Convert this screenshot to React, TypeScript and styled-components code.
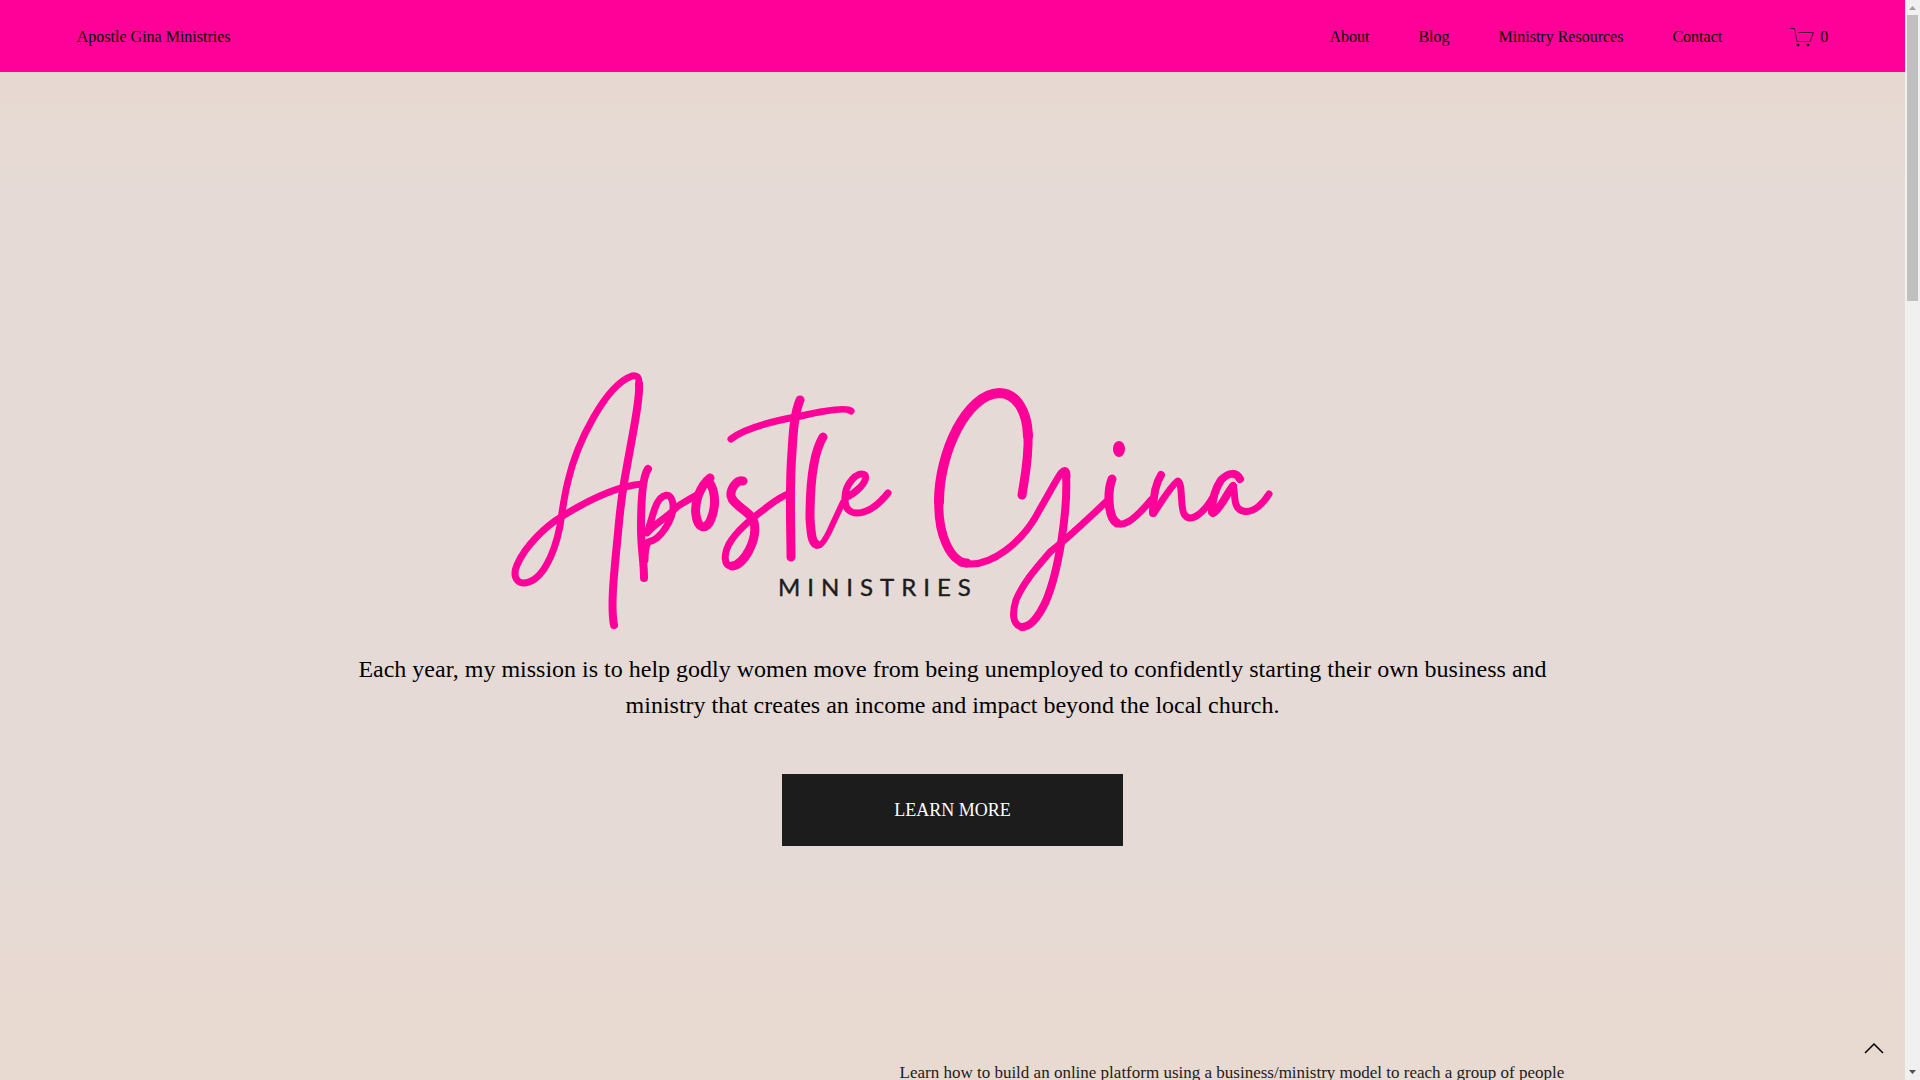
import React from 'react';
import styled, { createGlobalStyle } from 'styled-components';

const GlobalStyle = createGlobalStyle`
  *, *::before, *::after { box-sizing: border-box; }
  body {
    margin: 0;
    font-family: "Liberation Serif", "Times New Roman", serif;
    color: #000;
    background: #e6dad6;
  }
`;

const Window = styled.div`
  display: flex;
  height: 100vh;
  overflow: hidden;
`;

const Page = styled.div`
  display: flex;
  flex-direction: column;
  flex: 1;
  min-width: 0;
  overflow: hidden;
  background: linear-gradient(#e7d9d1 72px, #e6dad6 200px, #e6dad6 860px, #e8d9d1 1000px);
`;

const Header = styled.header`
  display: flex;
  align-items: center;
  justify-content: space-between;
  flex: none;
  height: 72px;
  padding: 2px 4vw 0;
  background: #ff0099;
`;

const HeaderLink = styled.a`
  display: inline-flex;
  align-items: center;
  gap: 6px;
  font-size: 16px;
  line-height: 24px;
  color: #000;
  text-decoration: none;
`;

const HeaderActions = styled.div`
  display: flex;
  align-items: center;
  gap: 68px;
`;

const Nav = styled.nav`
  display: flex;
  gap: 49px;
`;

const Hero = styled.section`
  display: flex;
  flex-direction: column;
  align-items: center;
  flex: none;
  padding: 288px 4vw 200px;
`;

const Wordmark = styled.svg`
  display: block;
  width: 904px;
  max-width: 100%;
  height: auto;
`;

const MarkText = styled.text`
  font-family: Lato, sans-serif;
  font-size: 24px;
  letter-spacing: 7px;
  fill: #1c1c1c;
  stroke: #1c1c1c;
  stroke-width: 0.4px;
`;

const Mission = styled.p`
  max-width: 1220px;
  margin: 1px 0 51px;
  font-size: 24px;
  line-height: 36px;
  text-align: center;
`;

const LearnMore = styled.button`
  width: 341px;
  height: 72px;
  border: 0;
  background: #1c1c1c;
  color: #fff;
  font-family: inherit;
  font-size: 18px;
  text-transform: uppercase;
  cursor: pointer;
`;

const Program = styled.section`
  display: grid;
  grid-template-columns: 557px minmax(0, 1fr);
  width: 100%;
  max-width: 1220px;
  margin: 0 auto;
  padding: 13px 0;
`;

const ProgramText = styled.p`
  grid-column: 2;
  margin: 0;
  font-size: 17px;
  line-height: 28px;
  white-space: nowrap;
  color: #1c1c1c;
`;

const BackToTop = styled.button`
  position: fixed;
  right: 36px;
  bottom: 20px;
  display: grid;
  place-items: center;
  width: 20px;
  height: 24px;
  padding: 0;
  border: 0;
  background: none;
  cursor: pointer;
`;

const ScrollTrack = styled.aside`
  display: flex;
  flex-direction: column;
  align-items: center;
  flex: none;
  width: 15px;
  background: #f0f0f0;
`;

const ScrollThumb = styled.div`
  width: 11px;
  height: 286px;
  margin-bottom: auto;
  background: #c0c0c0;
`;

const ScrollArrow = styled.svg`
  display: block;
  flex: none;
`;

type InkStroke = { d: string; width: number };

const ink: InkStroke[] = [
  // A
  { width: 8, d: 'M113 265 C109 245 114 205 117 173 C119 150 121 135 123 123 C126 105 129 90 132 73 C136 50 139 35 138 24' },
  { width: 7, d: 'M138 26 C139 17 136 15 131 16 C105 25 76 82 67 121 C63 137 61 152 59 166 C53 196 40 223 22 223 C14 222 12 214 16 205 C24 186 45 166 60 157 C84 142 115 126 141 124' },
  // p
  { width: 8, d: 'M147 109 C141 117 140 145 140 168 C140 190 143 200 143 218' },
  { width: 7, d: 'M144 200 C144 190 145 186 147 182 C160 180 173 158 172 145 C171 131 160 132 154 148 C151 156 149 165 146 173 C154 163 166 158 177 146 C184 142 190 138 196 135' },
  // o
  { width: 9, d: 'M209 118 C199 126 193 143 195 155 C197 170 206 170 210 159 C215 147 215 131 208 122' },
  // s
  { width: 9, d: 'M242 121 C236 119 229 129 230 136 C232 146 250 151 253 162 C257 180 243 205 231 206' },
  { width: 7, d: 'M231 206 C222 206 223 194 228 184 C237 168 256 155 266 147 C273 142 279 137 287 134' },
  // t
  { width: 9, d: 'M299 40 C293 54 292 75 291 92 C288 130 290 165 290 197' },
  { width: 7, d: 'M230 79 C242 69 272 61 300 56 C322 51 345 47 350 51' },
  // l
  { width: 9, d: 'M322 77 C311 95 309 130 309 158 C310 174 311 182 315 184' },
  { width: 6, d: 'M312 181 C316 190 321 186 328 172 L342 142' },
  // e
  { width: 7, d: 'M344 138 C355 133 367 122 364 115 C357 110 343 124 344 140 C344 149 349 153 356 153 C369 153 379 143 387 133' },
  // G
  { width: 10, d: 'M527 76 C526 50 515 33 498 33 C466 34 438 92 438 142' },
  { width: 9, d: 'M527 74 C528 98 524 116 521 135' },
  { width: 9, d: 'M438 138 C436 175 450 202 466 203' },
  { width: 7, d: 'M460 203 C489 210 523 181 539 149 C549 132 555 120 560 113 C564 109 566 110 566 116' },
  { width: 8, d: 'M565 114 C567 150 558 210 545 241 C538 256 530 267 521 267' },
  { width: 7, d: 'M522 267 C511 266 511 253 515 240 C523 221 538 205 549 192 C567 178 587 159 606 141' },
  // i
  { width: 9, d: 'M611 119 C606 132 607 158 616 163' },
  { width: 7, d: 'M611 158 C619 173 635 158 650 140' },
  // n
  { width: 8, d: 'M660 115 C655 123 652 138 652 153' },
  { width: 7, d: 'M653 153 C660 142 672 123 677 121 C682 124 679 146 683 154 C690 165 704 151 712 137' },
  // a
  { width: 8, d: 'M739 119 C735 112 728 112 720 120 C714 129 711 142 711 152' },
  { width: 8, d: 'M712 153 C719 150 726 133 732 126' },
  { width: 7, d: 'M732 126 C735 132 731 149 742 151 C753 154 763 142 768 134' },
];

function Logo() {
  return (
    <Wordmark viewBox="0 0 904 290" role="img" aria-label="Apostle Gina Ministries">
      <g fill="none" stroke="#ff0099" strokeLinecap="round" strokeLinejoin="round">
        {ink.map((s) => (
          <path key={s.d} d={s.d} strokeWidth={s.width} />
        ))}
      </g>
      <ellipse cx="618" cy="89" rx="6" ry="8" fill="#ff0099" />
      <MarkText x="277" y="236">MINISTRIES</MarkText>
    </Wordmark>
  );
}

function CartIcon() {
  return (
    <svg width="24" height="20" viewBox="0 0 24 20" fill="none" stroke="#000" strokeOpacity="0.7" aria-hidden="true">
      <path d="M0 1.5h4.5L7 14.5h13L23.500 5.500H8.500" />
      <circle cx="8" cy="18" r="1" fill="#000" />
      <circle cx="18" cy="18" r="1" fill="#000" />
    </svg>
  );
}

const links = ['About', 'Blog', 'Ministry Resources', 'Contact'];

export default function App() {
  return (
    <Window>
      <GlobalStyle />
      <Page>
        <Header>
          <HeaderLink href="#home">Apostle Gina Ministries</HeaderLink>
          <HeaderActions>
            <Nav>
              {links.map((label) => (
                <HeaderLink key={label} href={`#${label.toLowerCase().replace(' ', '-')}`}>
                  {label}
                </HeaderLink>
              ))}
            </Nav>
            <HeaderLink href="#cart">
              <CartIcon />
              <span>0</span>
            </HeaderLink>
          </HeaderActions>
        </Header>
        <main>
          <Hero>
            <Logo />
            <Mission>
              Each year, my mission is to help godly women move from being unemployed to confidently starting their own
              business and ministry that creates an income and impact beyond the local church.
            </Mission>
            <LearnMore type="button">Learn more</LearnMore>
          </Hero>
          <Program>
            <ProgramText>
              Learn how to build an online platform using a business/ministry model to reach a group of people
            </ProgramText>
          </Program>
        </main>
      </Page>
      <BackToTop type="button" aria-label="Back to top">
        <svg width="20" height="12" viewBox="0 0 20 12" fill="none" stroke="#000" strokeWidth="1.500" aria-hidden="true">
          <path d="M1 11l9-9 9 9" />
        </svg>
      </BackToTop>
      <ScrollTrack aria-hidden="true">
        <ScrollArrow width="15" height="15" viewBox="0 0 15 15">
          <path d="M4 10h7L7.500 6z" fill="#a0a0a0" />
        </ScrollArrow>
        <ScrollThumb />
        <ScrollArrow width="15" height="15" viewBox="0 0 15 15">
          <path d="M4 5h7L7.500 9z" fill="#505050" />
        </ScrollArrow>
      </ScrollTrack>
    </Window>
  );
}
